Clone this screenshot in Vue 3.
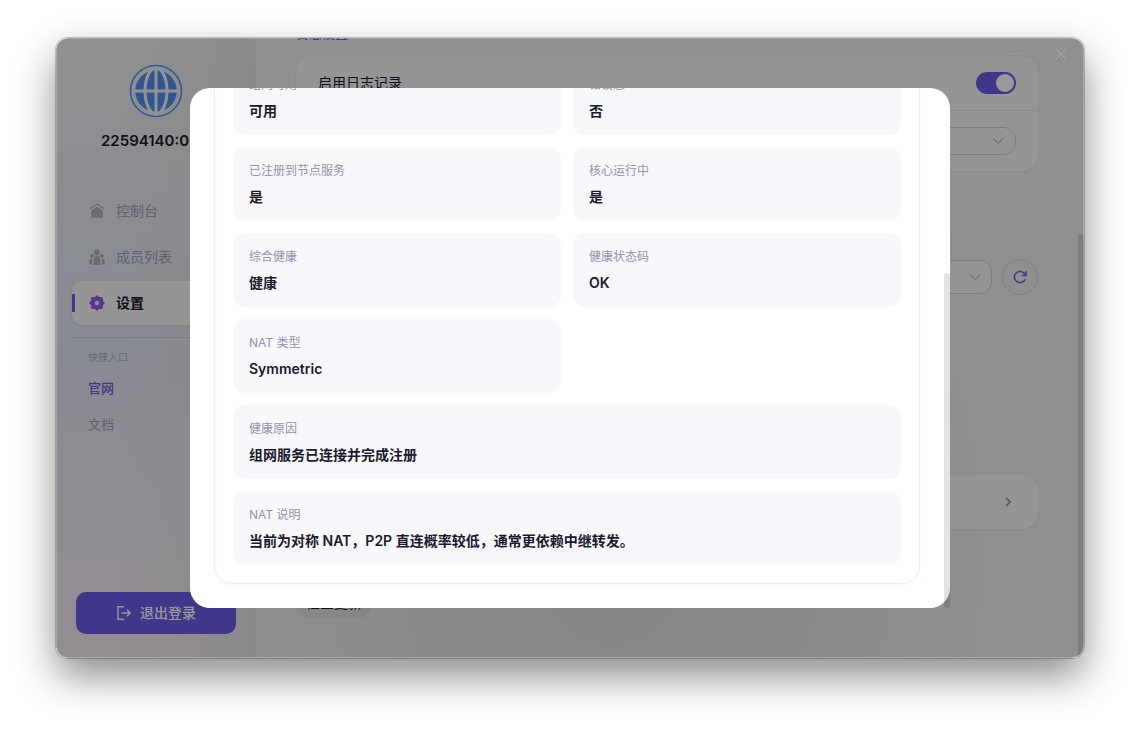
<script setup>
import { ref } from "vue"

const navItems = [
  { key: "console", label: "控制台" },
  { key: "members", label: "成员列表" },
  { key: "settings", label: "设置" }
]
const activeNav = ref("settings")

const links = [
  { label: "官网", active: true },
  { label: "文档", active: false }
]

const logEnabled = ref(true)

// 组网诊断信息
const details = [
  { label: "组网可用", value: "可用" },
  { label: "错误态", value: "否" },
  { label: "已注册到节点服务", value: "是" },
  { label: "核心运行中", value: "是" },
  { label: "综合健康", value: "健康" },
  { label: "健康状态码", value: "OK" },
  { label: "NAT 类型", value: "Symmetric" },
  { label: "健康原因", value: "组网服务已连接并完成注册", wide: true },
  { label: "NAT 说明", value: "当前为对称 NAT，P2P 直连概率较低，通常更依赖中继转发。", wide: true }
]
</script>

<template>
  <div class="desktop">
    <div class="window">
      <aside class="sidebar">
        <div class="profile">
          <svg class="logo" viewBox="0 0 54 54">
            <circle cx="27" cy="27" r="25.5" fill="none" stroke="#5490ee" stroke-width="1.6" />
            <circle cx="27" cy="27" r="20.8" fill="#5490ee" />
            <g fill="none" stroke="#f4f6fa" stroke-width="3">
              <path d="M27 4v46M5 27h44" />
              <ellipse cx="27" cy="27" rx="11" ry="23" />
            </g>
          </svg>
          <p class="account">22594140:0</p>
        </div>

        <nav class="nav">
          <button
            v-for="item in navItems"
            :key="item.key"
            class="nav-item"
            :class="{ active: item.key === activeNav }"
            @click="activeNav = item.key"
          >
            <svg v-if="item.key === 'console'" class="nav-icon" viewBox="0 0 18 18" fill="currentColor">
              <path d="M1.800 6.700 9 2.200l7.200 4.500" fill="none" stroke="currentColor" stroke-width="1.300" />
              <path d="M9 4.800 14.800 8.600V15a.8.8 0 0 1-.8.8H4a.8.8 0 0 1-.8-.8V8.600z" />
            </svg>
            <svg v-else-if="item.key === 'members'" class="nav-icon" viewBox="0 0 18 18" fill="currentColor">
              <circle cx="9" cy="4.500" r="2.900" />
              <circle cx="4" cy="7.800" r="1.900" />
              <circle cx="14" cy="7.800" r="1.900" />
              <path d="M5.600 17v-5.500a3.400 3.400 0 0 1 6.800 0V17z" />
              <path d="M1.300 16.500V12.700c0-1.500 1-2.300 3.200-2.300-.4.700-.4 1.500-.4 2.400v3.700zM16.700 16.500V12.700c0-1.500-1-2.300-3.200-2.300.4.700.4 1.500.4 2.400v3.700z" />
            </svg>
            <svg v-else class="nav-icon" viewBox="0 0 18 18" fill="currentColor">
              <rect x="3.100" y="3.100" width="11.800" height="11.800" rx="1.600" />
              <path d="M9 .9 17.100 9 9 17.100.9 9z" />
              <circle cx="9" cy="9" r="2.300" fill="#f0ecf8" />
            </svg>
            <span>{{ item.label }}</span>
          </button>
        </nav>

        <div class="quick">
          <p class="quick-title">快捷入口</p>
          <a v-for="link in links" :key="link.label" href="#" :class="{ active: link.active }">{{ link.label }}</a>
        </div>

        <button class="logout">
          <svg viewBox="0 0 16 16" fill="none" stroke="currentColor" stroke-width="1.400">
            <path d="M8 1.700H2v12.600h6M5.500 8h8.500M11 4.800 14.200 8 11 11.200" />
          </svg>
          <span>退出登录</span>
        </button>
      </aside>

      <main class="content">
        <h2 class="section-title">日志设置</h2>
        <section class="card">
          <div class="row">
            <label for="log-switch">启用日志记录</label>
            <input id="log-switch" v-model="logEnabled" class="switch" type="checkbox">
          </div>
          <div class="row">
            <select class="picker" aria-label="日志级别"></select>
            <svg class="arrow" viewBox="0 0 12 12"><path d="M1 3.500 6 8.500l5-5" /></svg>
          </div>
        </section>

        <section class="server">
          <div class="server-picker">
            <select class="picker" aria-label="服务器"></select>
            <svg class="arrow" viewBox="0 0 12 12"><path d="M1 3.500 6 8.500l5-5" /></svg>
          </div>
          <button class="refresh" aria-label="刷新">
            <svg viewBox="0 0 16 16" fill="none" stroke="currentColor" stroke-width="1.500">
              <path d="M13.200 10.200A5.600 5.600 0 1 1 12.600 4.800L14 6.200" />
              <path d="M14 2.200v4.200H9.800" />
            </svg>
          </button>
        </section>

        <button class="card entry" aria-label="诊断">
          <svg viewBox="0 0 12 12"><path d="M4 2l4 4-4 4" /></svg>
        </button>

        <button class="update">检查更新</button>
      </main>

      <div class="page-thumb"></div>

      <div class="mask">
        <div class="dialog-wrap">
          <div class="dialog" role="dialog">
            <dl class="panel">
              <div v-for="item in details" :key="item.label" class="cell" :class="{ wide: item.wide }">
                <dt>{{ item.label }}</dt>
                <dd>{{ item.value }}</dd>
              </div>
            </dl>
          </div>
          <div class="dialog-thumb"></div>
        </div>
      </div>

      <div class="caption">
        <button aria-label="最小化"><svg viewBox="0 0 16 16"><path d="M0 7.500h16" /></svg></button>
        <button aria-label="关闭"><svg viewBox="0 0 16 16"><path d="M3 3l10 10M13 3 3 13" /></svg></button>
      </div>
    </div>
  </div>
</template>

<style>
body {
  background: #fff;
}
</style>

<style scoped>
* {
  box-sizing: border-box;
}
.desktop {
  height: 100vh;
  padding: 38px 56px 74px;
  overflow: hidden;
  font-family: Inter, "Noto Sans CJK SC", sans-serif;
  font-size: 14px;
  line-height: 20px;
  color: #1a1a2e;
}
p,
h2,
dl,
dd {
  margin: 0;
}
button {
  padding: 0;
  border: 0;
  background: none;
  font: inherit;
  color: inherit;
}
.window {
  position: relative;
  display: flex;
  height: 100%;
  border-radius: 12px;
  overflow: hidden;
  background: radial-gradient(ellipse 42% 85% at 54% 82%, #dcdfe1, #f0f0f2);
  box-shadow: 0 0 1px 1px rgba(0, 0, 0, 0.22), 0 18px 40px rgba(0, 0, 0, 0.46);
}

/* 侧边栏 */
.sidebar {
  display: flex;
  flex-direction: column;
  flex: 0 0 200px;
  padding: 26px 0 24px;
  background:
    linear-gradient(90deg, rgba(225, 225, 228, 0) 30%, rgba(225, 225, 228, 0.6)),
    linear-gradient(180deg, #f0f1f4 0%, #ebedf2 20%, #e3e9f6 45%, #e8e8f3 62%, #f2ebf4 85%, #f5ebf3 100%);
}
.logo {
  display: block;
  width: 54px;
  height: 54px;
  margin: 0 auto 12px;
}
.account {
  padding-left: 45px;
  font-size: 15px;
  line-height: 22px;
  font-weight: 600;
}
.nav {
  display: flex;
  flex-direction: column;
  gap: 2px;
  padding: 37px 16px 12px;
}
.nav-item {
  position: relative;
  display: flex;
  align-items: center;
  gap: 10px;
  height: 44px;
  padding-left: 16px;
  border-radius: 10px;
  color: #a0a3b4;
}
.nav-icon {
  width: 18px;
  height: 18px;
  color: #b2b3b8;
}
.nav-item.active {
  background: #f8f8f8;
  box-shadow: 0 1px 4px rgba(0, 0, 0, 0.06);
  font-weight: 600;
  color: #1a1a2e;
}
.nav-item.active .nav-icon {
  color: #925fe2;
}
.nav-item.active::before {
  content: "";
  position: absolute;
  left: 0;
  top: 13px;
  width: 3px;
  height: 18px;
  background: #6c5ce7;
}
.quick {
  display: flex;
  flex-direction: column;
  margin: 0 16px;
  padding: 10px 16px;
  border-top: 1px solid #d0d2de;
}
.quick-title {
  margin-bottom: 4px;
  font-size: 10px;
  line-height: 18px;
  color: #b0b2c0;
}
.quick a {
  padding: 8px 0;
  font-size: 13px;
  color: #a0a3b4;
  text-decoration: none;
}
.quick a.active {
  font-weight: 500;
  color: #6c5ce7;
}
.logout {
  display: flex;
  align-items: center;
  justify-content: center;
  gap: 8px;
  height: 42px;
  margin: auto 20px 0;
  border-radius: 10px;
  background: #6c5ce7;
  color: #fff;
  font-weight: 500;
}
.logout svg {
  width: 16px;
  height: 16px;
}

/* 设置内容，滚动到底部 */
.content {
  display: flex;
  flex: 1;
  flex-direction: column;
  justify-content: flex-end;
  padding: 0 46px 40px 40px;
}
.content > * {
  flex-shrink: 0;
}
.section-title {
  margin-bottom: 14px;
  font-size: 13px;
  line-height: 18px;
  font-weight: 600;
  color: #6c5ce7;
}
.card {
  border-radius: 16px;
  background: #f9f9f9;
  box-shadow: 0 1px 3px rgba(0, 0, 0, 0.05);
}
.row {
  position: relative;
  display: flex;
  align-items: center;
  justify-content: space-between;
  padding: 16px 22px;
}
.row + .row {
  justify-content: flex-end;
  border-top: 1px solid #e8e8ea;
}
.switch {
  display: flex;
  align-items: center;
  appearance: none;
  width: 40px;
  height: 22px;
  margin: 0;
  padding: 2px;
  border-radius: 11px;
  background: #c8c8d0;
}
.switch::before {
  content: "";
  width: 18px;
  height: 18px;
  border-radius: 50%;
  background: #fff;
}
.switch:checked {
  justify-content: flex-end;
  background: #6c5ce7;
}
.picker {
  appearance: none;
  width: 200px;
  height: 28px;
  border: 1px solid #d4d4d8;
  border-radius: 12px;
  background: transparent;
  font: inherit;
}
.arrow {
  position: absolute;
  right: 33px;
  width: 12px;
  height: 12px;
  fill: none;
  stroke: #c8c8cc;
  stroke-width: 1.2;
}
.row .arrow {
  right: 34px;
}
.server {
  display: flex;
  align-items: center;
  gap: 10px;
  margin-top: 88px;
}
.server-picker {
  position: relative;
  display: flex;
  flex: 1;
  align-items: center;
}
.server-picker .picker {
  width: 100%;
  height: 34px;
  background: #f8f8f8;
}
.server-picker .arrow {
  right: 11px;
}
.refresh {
  display: flex;
  align-items: center;
  justify-content: center;
  width: 36px;
  height: 36px;
  border: 1px solid #dcdce0;
  border-radius: 50%;
  color: #6c5ce7;
}
.refresh svg {
  width: 16px;
  height: 16px;
}
.entry {
  display: flex;
  align-items: center;
  justify-content: flex-end;
  height: 54px;
  margin-top: 180px;
  padding-right: 24px;
}
.entry svg {
  width: 12px;
  height: 12px;
  fill: none;
  stroke: #85859a;
  stroke-width: 1.5;
}
.update {
  align-self: flex-start;
  height: 28px;
  margin-top: 61px;
  padding: 0 10px 2px;
  border-radius: 14px;
  background: rgba(0, 0, 0, 0.04);
}
.caption {
  position: absolute;
  top: 8px;
  right: 15px;
  display: flex;
  gap: 30px;
}
.caption svg {
  display: block;
  width: 16px;
  height: 16px;
  fill: none;
  stroke: rgba(255, 255, 255, 0.22);
}
.caption button:first-child svg {
  stroke: rgba(255, 255, 255, 0.08);
}
.page-thumb {
  position: absolute;
  top: 196px;
  right: 0;
  bottom: 0;
  width: 6px;
  border-radius: 3px 3px 0 0;
  background: rgba(0, 0, 0, 0.12);
}

/* 弹窗 */
.mask {
  position: absolute;
  inset: 0;
  display: flex;
  justify-content: center;
  padding: 49px 40px;
  border: 1px solid rgba(255, 255, 255, 0.2);
  border-radius: 12px;
  background: rgba(0, 0, 0, 0.4);
}
.dialog-wrap {
  position: relative;
  flex: 0 1 760px;
}
.dialog {
  display: flex;
  flex-direction: column;
  justify-content: flex-end;
  height: 100%;
  padding: 0 30px 24px 24px;
  border-radius: 20px;
  background: #fff;
  overflow: hidden;
}
.panel {
  display: grid;
  grid-template-columns: 1fr 1fr;
  gap: 12px;
  padding: 18px;
  border: 1px solid #e2f3e8;
  border-radius: 18px;
  box-shadow: 0 1px 3px rgba(0, 0, 0, 0.03);
}
.cell {
  display: flex;
  flex-direction: column;
  gap: 6px;
  padding: 14px 16px;
  border-radius: 12px;
  background: #f8f7fc;
}
.cell.wide {
  grid-column: span 2;
}
.cell dt {
  font-size: 12px;
  color: #9494ab;
}
.cell dd {
  font-weight: 600;
}
.dialog-thumb {
  position: absolute;
  top: 185px;
  right: 0;
  bottom: 0;
  width: 6px;
  border-radius: 3px;
  background: rgba(0, 0, 0, 0.11);
}
</style>
